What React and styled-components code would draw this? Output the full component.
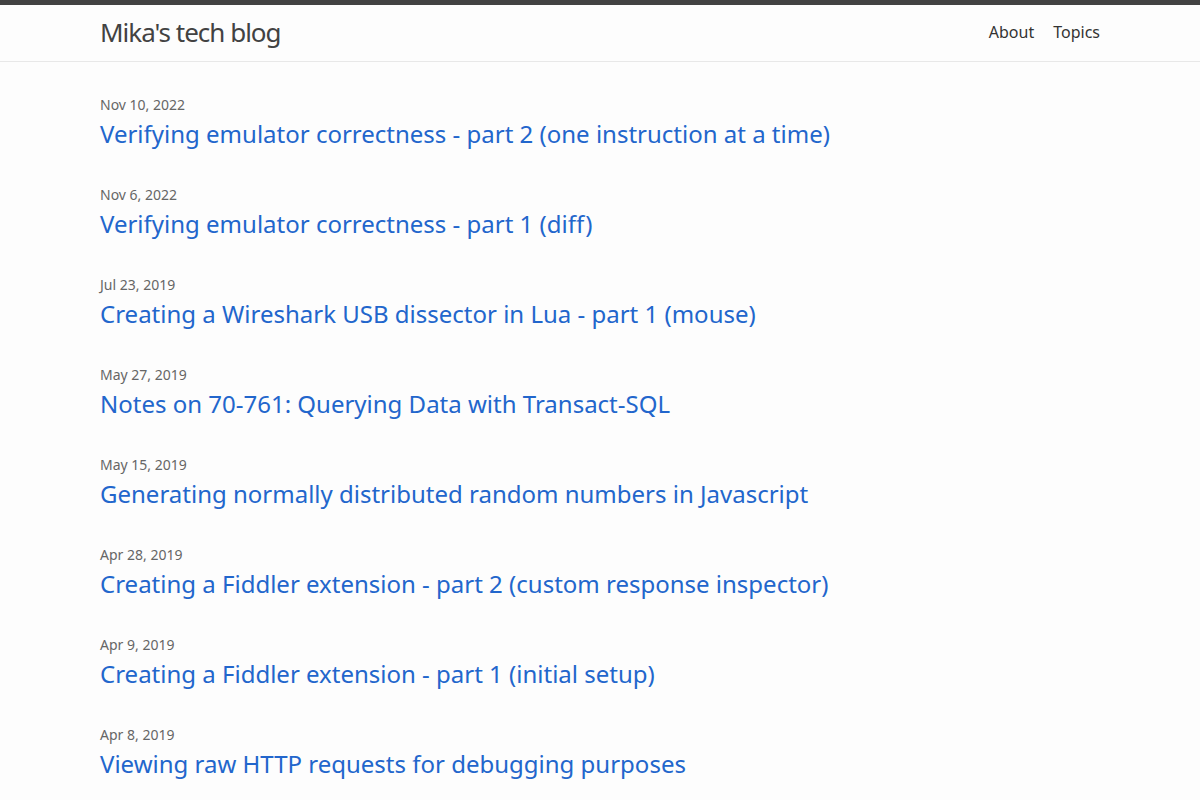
import styled, { createGlobalStyle } from "styled-components";

const GlobalStyle = createGlobalStyle`
  html, body {
    margin: 0;
    padding: 0;
    background-color: #fdfdfd;
    color: #111;
    font-family: "Noto Sans", "Open Sans", sans-serif;
    font-size: 16px;
  }
  * { box-sizing: border-box; }
`;

const SiteHeader = styled.header`
  border-top: 5px solid #424242;
  border-bottom: 1px solid #e8e8e8;
  min-height: 62px;
`;

const Wrapper = styled.div`
  max-width: 1000px;
  height: 54px;
  margin: 0 auto;
  display: flex;
  align-items: center;
  justify-content: space-between;
`;

const SiteTitle = styled.a`
  font-size: 26px;
  line-height: 54px;
  letter-spacing: -1px;
  color: #424242;
  text-decoration: none;
`;

const Nav = styled.nav`
  display: flex;
  gap: 19px;
`;

const NavLink = styled.a`
  font-size: 16px;
  line-height: 54px;
  color: #333;
  text-decoration: none;
`;

const PageContent = styled.main`
  max-width: 1000px;
  margin: 0 auto;
  padding: 33px 0;
`;

const PostList = styled.ul`
  list-style: none;
  margin: 0;
  padding: 0;
  display: flex;
  flex-direction: column;
  gap: 32px;
`;

const PostItem = styled.li`
  display: flex;
  flex-direction: column;
`;

const PostMeta = styled.span`
  font-size: 14px;
  line-height: 20px;
  color: #666;
`;

const PostLink = styled.a`
  font-size: 24px;
  line-height: 38px;
  color: #2266cc;
  text-decoration: none;
`;

const posts = [
  ["Nov 10, 2022", "Verifying emulator correctness - part 2 (one instruction at a time)"],
  ["Nov 6, 2022", "Verifying emulator correctness - part 1 (diff)"],
  ["Jul 23, 2019", "Creating a Wireshark USB dissector in Lua - part 1 (mouse)"],
  ["May 27, 2019", "Notes on 70-761: Querying Data with Transact-SQL"],
  ["May 15, 2019", "Generating normally distributed random numbers in Javascript"],
  ["Apr 28, 2019", "Creating a Fiddler extension - part 2 (custom response inspector)"],
  ["Apr 9, 2019", "Creating a Fiddler extension - part 1 (initial setup)"],
  ["Apr 8, 2019", "Viewing raw HTTP requests for debugging purposes"],
];

export default function App() {
  return (
    <>
      <GlobalStyle />
      <SiteHeader>
        <Wrapper>
          <SiteTitle href="#">Mika's tech blog</SiteTitle>
          <Nav>
            <NavLink href="#">About</NavLink>
            <NavLink href="#">Topics</NavLink>
          </Nav>
        </Wrapper>
      </SiteHeader>
      <PageContent>
        <PostList>
          {posts.map(([date, title]) => (
            <PostItem key={title}>
              <PostMeta>{date}</PostMeta>
              <PostLink href="#">{title}</PostLink>
            </PostItem>
          ))}
        </PostList>
      </PageContent>
    </>
  );
}
